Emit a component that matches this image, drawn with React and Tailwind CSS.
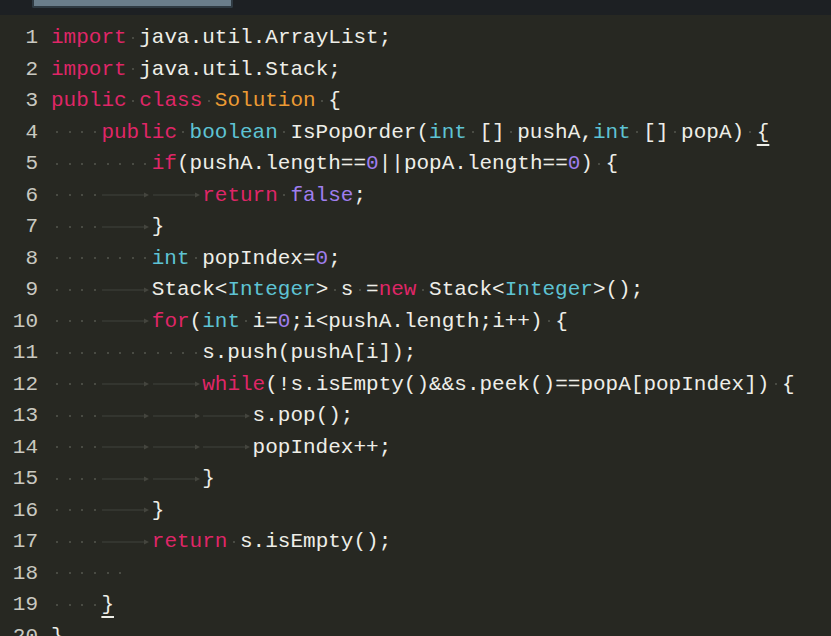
import React from 'react';

const KEYWORDS = new Set(['import', 'public', 'class', 'if', 'return', 'new', 'for', 'while']);
const TYPES = new Set(['boolean', 'int', 'Integer']);
const CONSTS = new Set(['false', 'true']);

const lines = [
  'import java.util.ArrayList;',
  'import java.util.Stack;',
  'public class Solution {',
  '    public boolean IsPopOrder(int [] pushA,int [] popA) {',
  '        if(pushA.length==0||popA.length==0) {',
  '    \t\treturn false;',
  '    \t}',
  '        int popIndex=0;',
  '    \tStack<Integer> s =new Stack<Integer>();',
  '    \tfor(int i=0;i<pushA.length;i++) {',
  '            s.push(pushA[i]);',
  '    \t\twhile(!s.isEmpty()&&s.peek()==popA[popIndex]) {',
  '    \t\t\ts.pop();',
  '    \t\t\tpopIndex++;',
  '    \t\t}',
  '    \t}',
  '    \treturn s.isEmpty();',
  '      ',
  '    }',
  '}',
];

// lines whose last char is the matched bracket (underlined)
const matched = { 3: true, 18: true };

const Dot = () => (
  <span className="inline-flex w-[1ch] justify-center items-center">
    <span className="w-[2px] h-[2px] rounded-full bg-[#56574f]" />
  </span>
);

const Tab = () => (
  <span className="inline-flex w-[4ch] items-center">
    <svg width="50" height="8" viewBox="0 0 50 8">
      <line x1="1" y1="4" x2="45" y2="4" stroke="#393a34" strokeWidth="1.5" />
      <path d="M43 1.5 L48 4 L43 6.5 Z" fill="#44453e" />
    </svg>
  </span>
);

function colorFor(tok) {
  if (KEYWORDS.has(tok)) return 'text-[#df2667]';
  if (TYPES.has(tok)) return 'text-[#5ec3d4]';
  if (CONSTS.has(tok) || /^\d+$/.test(tok)) return 'text-[#9f7eee]';
  if (tok === 'Solution') return 'text-[#ec9b34]';
  return 'text-[#eeeee8]';
}

const CodeLine = ({ text, idx }) => {
  const toks = text.match(/\t| |[A-Za-z_]\w*|\d+|./g) || [];
  const lastBrace = matched[idx] ? toks.length - 1 : -1;
  return (
    <div className="flex items-center h-[31.5px] whitespace-pre">
      <span className="w-[38px] text-right text-[#c9c9c1] shrink-0">{idx + 1}</span>
      <span className="ml-[13px] flex items-center">
        {toks.map((t, i) => {
          if (t === ' ') return <Dot key={i} />;
          if (t === '\t') return <Tab key={i} />;
          if (i === lastBrace)
            return (
              <span key={i} className="text-[#eeeee8] underline decoration-2 underline-offset-[6px]">
                {t}
              </span>
            );
          return (
            <span key={i} className={colorFor(t)}>
              {t}
            </span>
          );
        })}
      </span>
    </div>
  );
};

export default function App() {
  return (
    <div className="w-[831px] h-[636px] overflow-hidden bg-[#272822] font-['Liberation_Mono','Courier_New',monospace] text-[21px]">
      <div className="h-[15px] bg-[#1d2023] flex">
        <div className="ml-[32px] w-[201px] h-[8px] bg-[#6a7d8a] border-x-2 border-b-2 border-[#2f3a42] rounded-b-[2px]" />
      </div>
      <div className="pt-[7px]">
        {lines.map((l, i) => (
          <CodeLine key={i} text={l} idx={i} />
        ))}
      </div>
    </div>
  );
}
